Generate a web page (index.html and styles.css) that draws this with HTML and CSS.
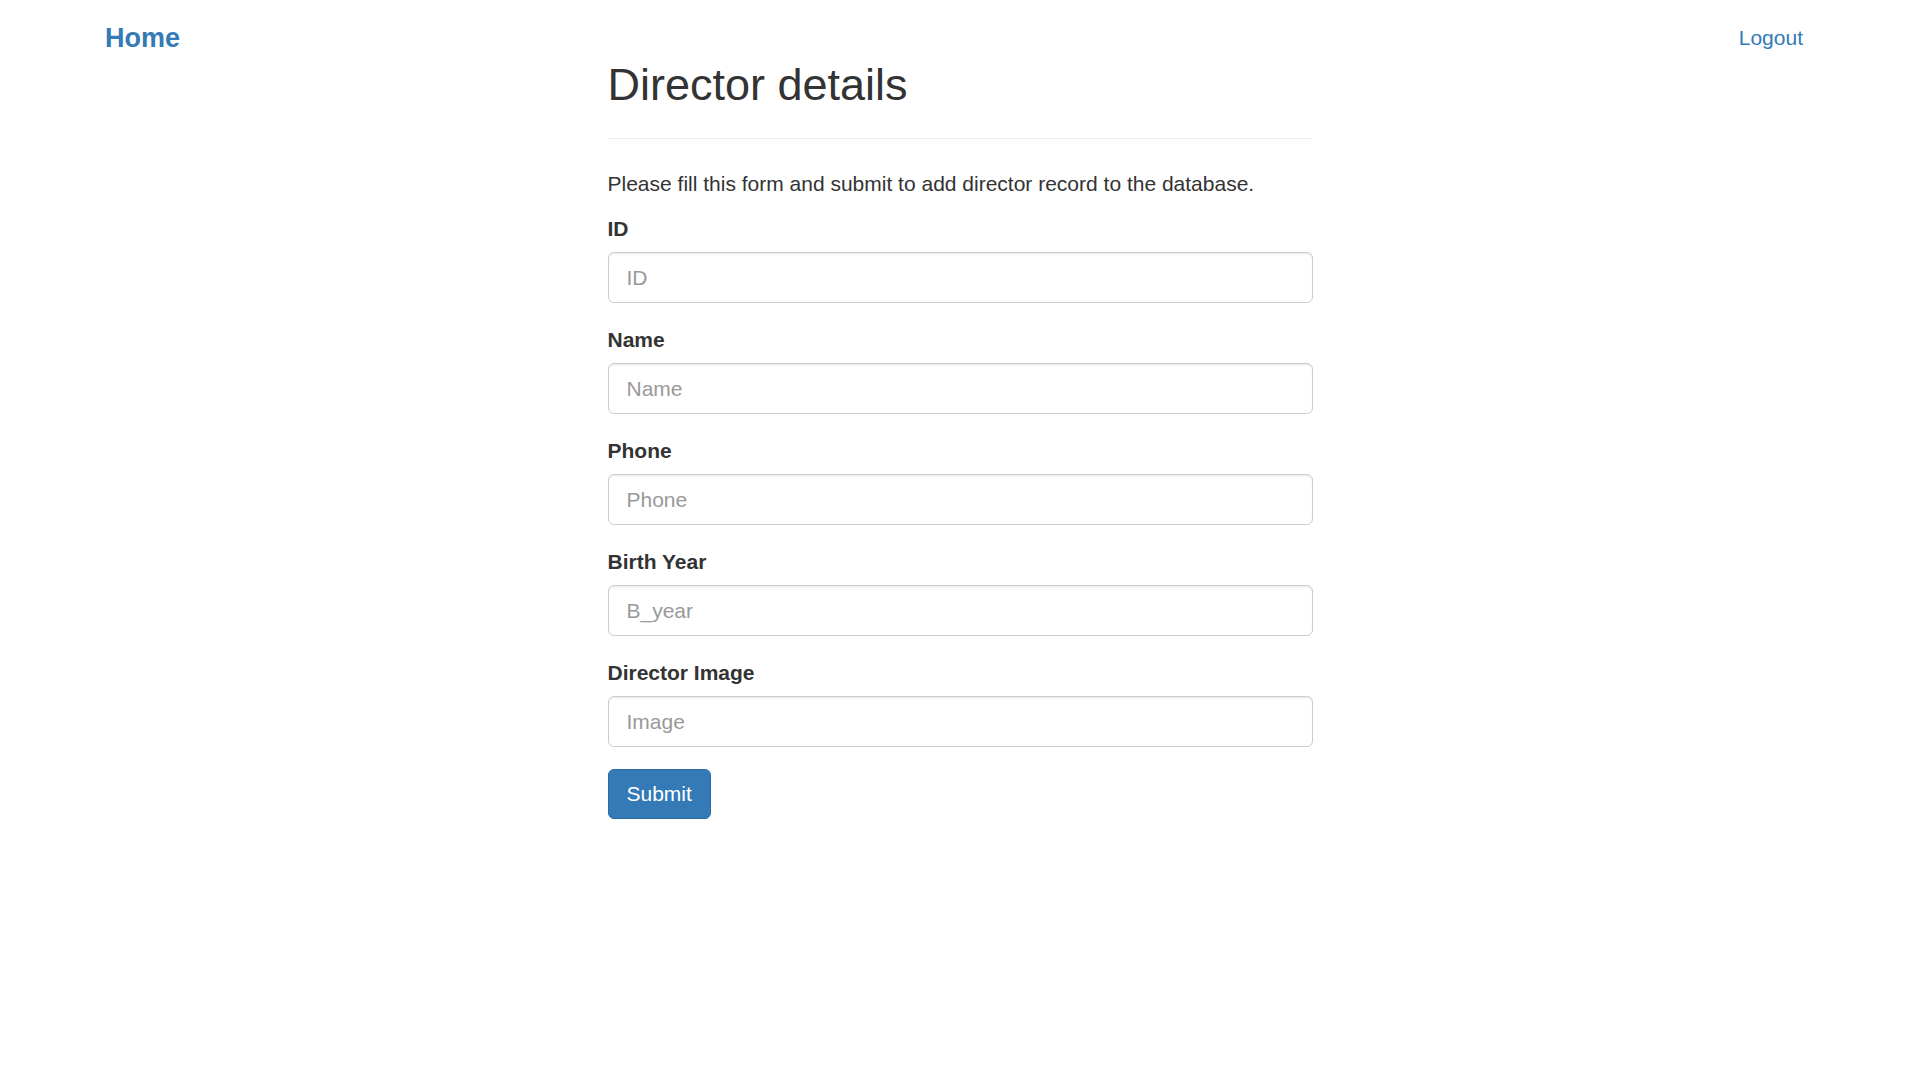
FILE: index.html
```html
<!DOCTYPE html>
<html lang="en">
<head>
<meta charset="utf-8">
<title>Director details</title>
<link rel="stylesheet" href="styles.css">
</head>
<body>
<nav class="topbar">
  <a class="brand" href="#">Home</a>
  <a class="nav-link" href="#">Logout</a>
</nav>
<main class="wrapper">
  <div class="page-header">
    <h2>Director details</h2>
  </div>
  <p class="intro">Please fill this form and submit to add director record to the database.</p>
  <form class="form">
    <div class="form-group">
      <label class="label">ID</label>
      <input class="form-control" type="text" placeholder="ID">
    </div>
    <div class="form-group">
      <label class="label">Name</label>
      <input class="form-control" type="text" placeholder="Name">
    </div>
    <div class="form-group">
      <label class="label">Phone</label>
      <input class="form-control" type="text" placeholder="Phone">
    </div>
    <div class="form-group">
      <label class="label">Birth Year</label>
      <input class="form-control" type="text" placeholder="B_year">
    </div>
    <div class="form-group">
      <label class="label">Director Image</label>
      <input class="form-control" type="text" placeholder="Image">
    </div>
    <div class="form-group">
      <button class="btn-primary" type="button">Submit</button>
    </div>
  </form>
</main>
</body>
</html>
```

FILE: styles.css
```css
* {
  box-sizing: border-box;
}

html, body {
  margin: 0;
  padding: 0;
  background: #fff;
}

body {
  font-family: "Liberation Sans", Arial, Helvetica, sans-serif;
  font-size: 21px;
  line-height: 30px;
  color: #333;
}

a {
  text-decoration: none;
  color: #337ab7;
}

.topbar {
  display: flex;
  justify-content: space-between;
  align-items: flex-start;
  height: 52px;
  padding: 23px 117px 0 105px;
}

.brand {
  font-size: 27px;
  font-weight: bold;
  line-height: 30px;
}

.nav-link {
  font-size: 21px;
  line-height: 30px;
}

.wrapper {
  width: 705px;
  margin: 0 auto;
  padding-top: 8px;
}

.page-header {
  padding-bottom: 13px;
  margin-bottom: 30px;
  border-bottom: 1px solid #eee;
}

.page-header h2 {
  margin: 0 0 15px;
  font-size: 45px;
  font-weight: 500;
  line-height: 49.5px;
  color: #333;
}

.intro {
  margin: 0 0 15px;
}

.form-group {
  margin-bottom: 21.5px;
}

.label {
  display: inline-block;
  margin-bottom: 8.5px;
  font-weight: bold;
}

.form-control {
  display: block;
  width: 100%;
  height: 51px;
  padding: 9px 18px;
  font-family: inherit;
  font-size: 21px;
  line-height: 30px;
  color: #555;
  background: #fff;
  border: 1px solid #ccc;
  border-radius: 6px;
  box-shadow: inset 0 1.5px 1.5px rgba(0, 0, 0, 0.075);
  outline: none;
}

.form-control::placeholder {
  color: #999;
  opacity: 1;
}

.btn-primary {
  display: inline-block;
  height: 50px;
  padding: 9px 18px;
  font-family: inherit;
  font-size: 21px;
  line-height: 30px;
  color: #fff;
  background: #337ab7;
  border: 1px solid #2e6da4;
  border-radius: 6px;
  cursor: pointer;
}
```
